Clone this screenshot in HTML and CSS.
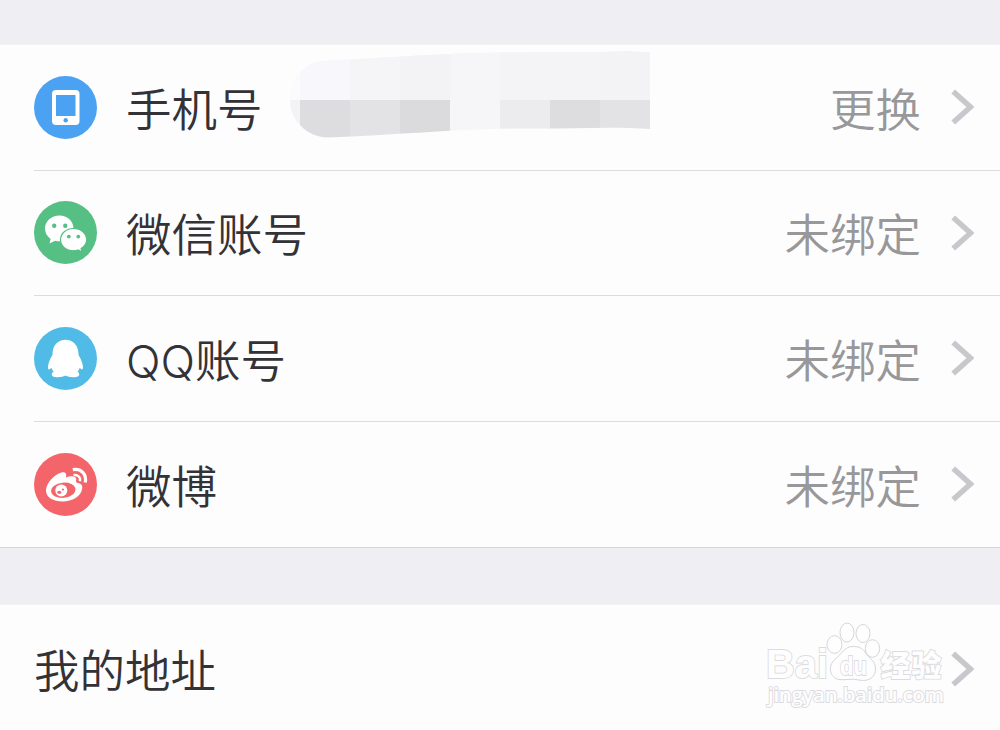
FILE: index.html
```html
<!DOCTYPE html>
<html lang="zh-CN">
<head>
    <meta charset="UTF-8">
    <meta name="viewport" content="width=device-width, initial-scale=1.0">
    <title>账号绑定</title>
    <link rel="stylesheet" href="styles.css">
</head>
<body>
    <div class="group">
        <div class="row">
            <svg class="icon" viewBox="0 0 63 63">
                <circle cx="31.5" cy="31.5" r="31.5" fill="#4ba2f3"/>
                <rect x="18" y="14" width="27.500" height="35" rx="4" fill="#fff"/>
                <rect x="22" y="19" width="19.500" height="21" fill="#4ba2f3"/>
                <circle cx="31.700" cy="44.300" r="2.200" fill="#4ba2f3"/>
            </svg>
            <span class="label">手机号</span>
            <!-- hidden phone number -->
            <svg class="mosaic" viewBox="290 50 361 88">
                <clipPath id="smear">
                    <path d="M290 101C292 84 297 64 324 61C370 59 425 54 480 53C540 51 600 53 625 51L650 52.500V129C610 126 570 129 530 128.500C470 128 400 135 328 137.500C305 137 290 118 290 101Z"/>
                </clipPath>
                <g clip-path="url(#smear)" shape-rendering="crispEdges">
                    <rect x="290" y="50" width="361" height="50" fill="#f4f3f6"/>
                    <rect x="290" y="50" width="60" height="50" fill="#f8f7fb"/>
                    <rect x="290" y="50" width="10" height="50" fill="#fbfafc"/>
                    <rect x="350" y="50" width="50" height="50" fill="#f5f4f6"/>
                    <rect x="400" y="50" width="50" height="50" fill="#f3f2f4"/>
                    <rect x="450" y="50" width="50" height="90" fill="#f6f5f8"/>
                    <rect x="600" y="50" width="50" height="50" fill="#f3f2f4"/>
                    <rect x="290" y="100" width="10" height="40" fill="#f3f2f5"/>
                    <rect x="300" y="100" width="50" height="40" fill="#dddcdf"/>
                    <rect x="350" y="100" width="50" height="40" fill="#e3e2e4"/>
                    <rect x="400" y="100" width="50" height="40" fill="#dbdadc"/>
                    <rect x="500" y="100" width="50" height="40" fill="#ecebee"/>
                    <rect x="550" y="100" width="50" height="40" fill="#dddcde"/>
                    <rect x="600" y="100" width="50" height="40" fill="#e3e2e5"/>
                </g>
            </svg>
            <span class="value">更换</span>
            <svg class="arrow" viewBox="0 0 23 36"><path d="M2.200 2.500L19.500 18L2.200 33.500"/></svg>
        </div>
        <div class="row">
            <svg class="icon" viewBox="0 0 63 63">
                <circle cx="31.5" cy="31.5" r="31.5" fill="#56bf83"/>
                <path d="M25.500 14.500C17.500 14.500 11 20.200 11 27.500C11 31.800 13.200 35.500 16.700 37.900L15.500 42.500L21 39.700C22.500 40.100 24 40.300 25.500 40.300C33.500 40.300 39.500 34.500 39.500 27.500C39.500 20.200 33.500 14.500 25.500 14.500Z" fill="#fff"/>
                <path d="M39.500 27.500C32.200 27.500 26.500 32.500 26.500 38.800C26.500 45.200 32.200 49.800 39.500 49.800C41.200 49.800 42.800 49.500 44.200 49L48 51L47.100 47.400C50.500 45.500 52.700 42.400 52.700 38.800C52.700 32.500 47 27.500 39.500 27.500Z" fill="#fff" stroke="#56bf83" stroke-width="1.200"/>
                <g fill="#56bf83">
                    <circle cx="20.200" cy="24.800" r="2.200"/>
                    <circle cx="31.300" cy="24.800" r="2.200"/>
                    <circle cx="34.800" cy="35.600" r="1.900"/>
                    <circle cx="44.300" cy="35.600" r="1.900"/>
                </g>
            </svg>
            <span class="label">微信账号</span>
            <span class="value">未绑定</span>
            <svg class="arrow" viewBox="0 0 23 36"><path d="M2.200 2.500L19.500 18L2.200 33.500"/></svg>
        </div>
        <div class="row">
            <svg class="icon" viewBox="0 0 63 63">
                <circle cx="31.5" cy="31.5" r="31.5" fill="#4fbbe6"/>
                <path d="M31.500 12.700C24 12.700 18.800 18.500 18.600 26L18.300 28.500C16.500 31 14 36.500 14 40.500C14 43 15.500 43 17.300 40.800C17.700 42.200 18.500 43.500 19.700 44.700C17 46 17 49.500 21 50C25 50.600 29 49.800 31.500 48.600C34 49.800 38 50.600 42 50C46 49.500 46 46 43.500 44.700C44.600 43.500 45.400 42.200 45.800 40.800C47.500 43 49 43 49 40.500C49 36.500 46.500 31 44.700 28.500L44.400 26C44.200 18.500 39 12.700 31.500 12.700Z" fill="#fff"/>
            </svg>
            <span class="label">QQ账号</span>
            <span class="value">未绑定</span>
            <svg class="arrow" viewBox="0 0 23 36"><path d="M2.200 2.500L19.500 18L2.200 33.500"/></svg>
        </div>
        <div class="row">
            <svg class="icon" viewBox="0 0 63 63">
                <circle cx="31.5" cy="31.5" r="31.5" fill="#f3656b"/>
                <path d="M27.500 19.500C31 18.700 33 20.300 32 24.500C36 22.800 42 22.500 42.200 26C42.300 27.500 41.500 28.500 42.500 29.500C46.500 30.500 48.500 31.500 48.300 35C47.500 43.500 38 48.500 28.500 48.500C19.500 48.500 12 44.500 12 37.500C12 30.500 20.500 21 27.500 19.500Z" fill="#fff"/>
                <ellipse cx="29.300" cy="37.300" rx="12.200" ry="7.600" transform="rotate(-6 29.300 37.300)" fill="#f3656b"/>
                <circle cx="27.300" cy="37.600" r="6" fill="#fff"/>
                <ellipse cx="25.300" cy="39.300" rx="2" ry="1.600" fill="#f3656b"/>
                <circle cx="28.900" cy="36.600" r="1.100" fill="#f3656b"/>
                <g fill="none" stroke="#fff">
                    <path d="M38.800 16.600C47 15 53 21 51.200 29.500" stroke-width="3.200"/>
                    <path d="M39.500 22.200C43.500 21.500 47 24 45.900 28.200" stroke-width="2.400"/>
                </g>
            </svg>
            <span class="label">微博</span>
            <span class="value">未绑定</span>
            <svg class="arrow" viewBox="0 0 23 36"><path d="M2.200 2.500L19.500 18L2.200 33.500"/></svg>
        </div>
    </div>

    <div class="group address">
        <div class="row">
            <span class="label">我的地址</span>
            <svg class="arrow" viewBox="0 0 23 36"><path d="M2.200 2.500L19.500 18L2.200 33.500"/></svg>
        </div>
        <svg class="watermark" viewBox="0 0 190 100">
            <g class="outline">
                <text class="brand" x="4" y="61.500" textLength="62" lengthAdjust="spacingAndGlyphs">Bai</text>
                <ellipse cx="72.500" cy="28.500" rx="7.500" ry="8.800"/>
                <ellipse cx="85" cy="16.500" rx="7" ry="9.500"/>
                <ellipse cx="101" cy="17.500" rx="7" ry="9"/>
                <ellipse cx="110.500" cy="32.500" rx="7.200" ry="8.800"/>
                <path d="M91 30.500C82 30.500 79 39 73 43.500C65 50 68 62 77 63.500C84 64.500 90 62 97 64C107 66 113.500 61 113.500 53C113.500 44 107 43 103 36C100 32 97 30.500 91 30.500Z"/>
                <text class="du" x="78" y="58.500" textLength="27" lengthAdjust="spacingAndGlyphs">du</text>
                <text class="name" x="118.500" y="60" textLength="61">经验</text>
                <text class="site" x="6" y="86" textLength="176">jingyan.baidu.com</text>
            </g>
        </svg>
    </div>
</body>
</html>
```
FILE: styles.css
```css
body {
    margin: 0;
    padding-top: 44px;
    height: 686px;
    overflow: hidden;
    background: #efeef2;
    font-family: Inter, "Noto Sans CJK SC", sans-serif;
    font-size: 45.500px;
    font-weight: 350;
    color: #333236;
}

.group {
    background: #fdfdfe;
    padding-left: 34px;
    border-top: 1px solid #f2f1f4;
    border-bottom: 1px solid #d5d4d8;
}

.row {
    display: flex;
    align-items: center;
    box-sizing: border-box;
    height: 125.500px;
    padding-right: 26px;
    border-bottom: 1px solid #dcdbdf;
}

.row:last-child {
    border-bottom: none;
}

.icon {
    width: 63px;
    height: 63px;
    margin-right: 29px;
    flex: none;
}

.label {
    padding-top: 7px;
    line-height: 60px;
    white-space: nowrap;
}

.mosaic {
    width: 361px;
    height: 88px;
    margin: -27px 0 0 27px;
}

.value {
    margin-left: auto;
    padding-top: 7px;
    line-height: 60px;
    color: #98979a;
}

.arrow {
    width: 23px;
    height: 36px;
    margin-left: 30px;
    flex: none;
}

.arrow path {
    fill: none;
    stroke: #c8c7cc;
    stroke-width: 5.500;
}

.address {
    position: relative;
    height: 140px;
    margin-top: 56px;
}

.address .row {
    height: 128px;
}

.address .arrow {
    margin-left: auto;
}

/* watermark lies over the last row */
.watermark {
    position: absolute;
    left: 762px;
    top: 11px;
    width: 190px;
    height: 100px;
}

.outline {
    fill: #fefefe;
    stroke: #d6d5d9;
    stroke-width: 1;
}

.outline text {
    stroke: #dcdbde;
    stroke-width: 1.800;
    paint-order: stroke;
}

.brand {
    font: bold 41px "Liberation Sans", sans-serif;
}

.du {
    font: bold 26px "Liberation Sans", sans-serif;
}

.name {
    font: 900 30px "Noto Sans CJK SC", sans-serif;
}

.site {
    font: 600 20.500px "Open Sans", sans-serif;
}
```
